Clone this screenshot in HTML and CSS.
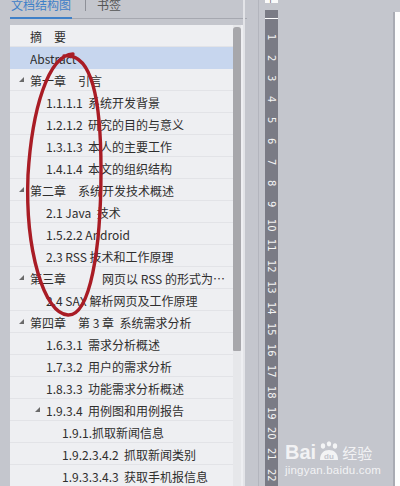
FILE: index.html
```html
<!doctype html>
<html lang="zh-CN">
  <head>
    <meta charset="UTF-8" />
    <title>文档结构图</title>
    <link rel="stylesheet" href="styles.css">
  </head>
  <body>
    <div id="workspace">
      <aside id="nav-pane">
        <div class="tabs">
          <span class="tab active">文档结构图</span>
          <span class="tab-sep"></span>
          <span class="tab">书签</span>
        </div>

        <div class="tree">
          <ul class="tree-list">
            <li class="row lv1"><span class="label">摘　要</span></li>
            <li class="row lv1 selected"><span class="label">Abstract</span></li>
            <li class="row lv1"><i class="toggle"></i><span class="label">第一章　引言</span></li>
            <li class="row lv2"><span class="label">1.1.1.1&nbsp; 系统开发背景</span></li>
            <li class="row lv2"><span class="label">1.2.1.2&nbsp; 研究的目的与意义</span></li>
            <li class="row lv2"><span class="label">1.3.1.3&nbsp; 本人的主要工作</span></li>
            <li class="row lv2"><span class="label">1.4.1.4&nbsp; 本文的组织结构</span></li>
            <li class="row lv1"><i class="toggle"></i><span class="label">第二章　系统开发技术概述</span></li>
            <li class="row lv2"><span class="label">2.1 Java&nbsp; 技术</span></li>
            <li class="row lv2"><span class="label">1.5.2.2 Android</span></li>
            <li class="row lv2"><span class="label">2.3 RSS 技术和工作原理</span></li>
            <li class="row lv1"><i class="toggle"></i><span class="label">第三章　　　网页以 RSS 的形式为新闻客户端提供数据</span></li>
            <li class="row lv2"><span class="label">2.4 SAX 解析网页及工作原理</span></li>
            <li class="row lv1"><i class="toggle"></i><span class="label">第四章　第 3 章&nbsp; 系统需求分析</span></li>
            <li class="row lv2"><span class="label">1.6.3.1&nbsp; 需求分析概述</span></li>
            <li class="row lv2"><span class="label">1.7.3.2&nbsp; 用户的需求分析</span></li>
            <li class="row lv2"><span class="label">1.8.3.3&nbsp; 功能需求分析概述</span></li>
            <li class="row lv2"><i class="toggle"></i><span class="label">1.9.3.4&nbsp; 用例图和用例报告</span></li>
            <li class="row lv3"><span class="label">1.9.1.抓取新闻信息</span></li>
            <li class="row lv3"><span class="label">1.9.2.3.4.2&nbsp; 抓取新闻类别</span></li>
            <li class="row lv3"><span class="label">1.9.3.3.4.3&nbsp; 获取手机报信息</span></li>
          </ul>
          <div class="scrollbar"><div class="thumb"></div></div>
        </div>
      </aside>

      <div class="splitter"></div>

      <div class="ruler-col">
        <div class="ruler-corner">L</div>
        <div class="ruler">
          <div class="margin-mark"></div>
          <div class="ruler-nums">
            <span>1</span><span>2</span><span>3</span><span>4</span><span>5</span><span>6</span>
            <span>7</span><span>8</span><span>9</span><span>10</span><span>11</span><span>12</span>
            <span>13</span><span>14</span><span>15</span><span>16</span><span>17</span><span>18</span>
            <span>19</span><span>20</span><span>21</span><span>22</span>
          </div>
        </div>
      </div>

      <main id="canvas">
        <div class="watermark">
          <div class="wm-logo">
            <span class="wm-bai">Bai</span>
            <svg class="wm-paw" width="22" height="20" viewBox="0 0 22 20">
              <ellipse cx="5" cy="5" rx="2.2" ry="2.8" />
              <ellipse cx="11" cy="2.8" rx="2.2" ry="2.6" />
              <ellipse cx="17" cy="5" rx="2.2" ry="2.8" />
              <path d="M2 19 C2 12 6 9 11 9 C16 9 20 12 20 19 Z" />
              <text x="11" y="17.5" text-anchor="middle">du</text>
            </svg>
            <span class="wm-jy">经验</span>
          </div>
          <div class="wm-url">jingyan.baidu.com</div>
        </div>
      </main>
      <div class="page-edge"></div>

      <svg class="annotation" width="400" height="486" viewBox="0 0 400 486">
        <path d="M73 54 C48 55 32 110 28 175 C25 250 44 314 68 315 C90 316 101 250 101 170 C101 100 92 52 64 56" />
      </svg>
    </div>
  </body>
</html>
```

FILE: styles.css
```css
:root {
  --bg: #c4c6cd; --panel-bg: #eeeff2; --row-line: #e2e3e7;
  --fg: #2e2e2e; --select: #c7d6ee; --tab-blue: #3f80c8;
  --ruler: #7a7b85; --ink: #a91c25;
}
html, body { margin: 0; padding: 0; background-color: var(--bg); font-family: "Noto Sans CJK SC", "Noto Sans", sans-serif; color: var(--fg); overflow: hidden; }
#workspace { position: relative; display: flex; width: 400px; height: 486px; overflow: hidden; }

#nav-pane { width: 233px; padding-left: 10px; display: flex; flex-direction: column; }
.tabs { display: flex; align-items: flex-end; height: 22px; margin-top: -3px; width: 237px; border-bottom: 1px solid #a6a8b0; box-sizing: border-box; }
.tab { font-size: 12px; line-height: 14px; padding: 0 1px 6px; color: #555; }
.tab.active { color: var(--tab-blue); border-bottom: 2px solid var(--tab-blue); margin-bottom: -1px; padding-bottom: 5px; }
.tab-sep { width: 1px; height: 16px; background-color: #8e9098; margin: 0 10px 7px 13px; align-self: flex-end; }

.tree { margin-top: 6px; flex: 1; display: flex; background-color: var(--panel-bg); overflow: hidden; }
.tree-list { list-style: none; margin: 0; padding: 0; width: 223px; }
.row { position: relative; display: flex; align-items: center; height: 22px; font-size: 12px; box-sizing: border-box; border-bottom: 1px solid var(--row-line); }
.row.selected { background-color: var(--select); border-bottom-color: var(--select); }
.row.lv1 { padding-left: 20px; }
.row.lv2 { padding-left: 36px; }
.row.lv3 { padding-left: 52px; }
.label { white-space: nowrap; overflow: hidden; text-overflow: ellipsis; padding-top: 1px; padding-right: 4px; }
.toggle { position: absolute; top: 8px; width: 0; height: 0; border-style: solid; border-width: 0 0 5px 5px; border-color: transparent transparent #6a6a6a transparent; }
.lv1 .toggle { left: 9px; }
.lv2 .toggle { left: 25px; }

.scrollbar { width: 8px; background-color: #e6e7ea; padding-top: 2px; }
.thumb { height: 324px; background-color: #a7a7ab; border-radius: 3px 3px 1px 1px; }

.splitter { width: 13px; border-left: 2px solid #e3e4e8; border-right: 1px solid #b3b5bd; }

.ruler-col { width: 13px; margin-left: 6px; display: flex; flex-direction: column; }
.ruler-corner { height: 6px; margin-top: -2px; background-color: #fafafa; font-size: 7px; line-height: 6px; text-align: center; color: #555; overflow: hidden; }
.ruler { margin-top: 7px; flex: 1; background-color: var(--ruler); }
.margin-mark { height: 8px; border-bottom: 1px solid #fff; }
.ruler-nums { display: flex; flex-direction: column; padding-top: 7px; }
.ruler-nums span { height: 20.9px; display: flex; align-items: center; justify-content: center; writing-mode: vertical-rl; font-family: "DejaVu Sans", sans-serif; font-size: 10px; color: #f4f4f4; }

#canvas { flex: 1; display: flex; flex-direction: column; justify-content: flex-end; padding: 0 0 10px 7px; }
.watermark { color: rgba(255, 255, 255, 0.8); }
.wm-logo { display: flex; align-items: flex-end; gap: 2px; }
.wm-bai { font-family: "Liberation Sans", sans-serif; font-weight: bold; font-size: 20px; line-height: 18px; }
.wm-paw { fill: rgba(255, 255, 255, 0.8); }
.wm-paw text { fill: var(--bg); font-family: "Liberation Sans", sans-serif; font-size: 8px; font-weight: bold; }
.wm-jy { font-size: 15px; line-height: 17px; }
.wm-url { font-family: "Liberation Sans", sans-serif; font-size: 11.5px; margin-top: 3px; letter-spacing: 0.2px; }

.page-edge { width: 5px; margin-top: 12px; background-color: #fdfdfd; border-left: 2px solid #a9abb3; margin-left: 1px; }

.annotation { position: absolute; left: 0; top: 0; pointer-events: none; }
.annotation path { fill: none; stroke: var(--ink); stroke-width: 3.4; stroke-linecap: round; }
```
